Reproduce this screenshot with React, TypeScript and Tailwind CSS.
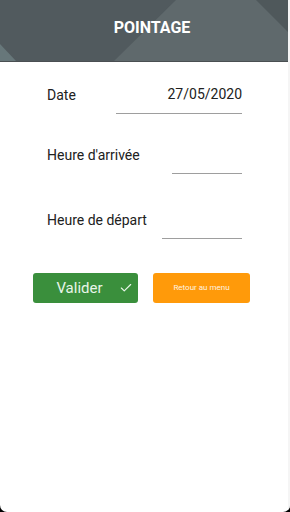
import { Check } from "lucide-react";

function HeaderArt() {
  return (
    <svg
      className="absolute inset-0 h-full w-full"
      viewBox="0 0 288 61"
      preserveAspectRatio="none"
    >
      <rect width="288" height="61" fill="#515a5e" />
      <polygon points="176,0 288,0 288,61 114,61" fill="#5f696c" />
      <polygon points="256,0 288,0 288,32" fill="#4f585b" />
      <polygon points="0,44 16,61 0,61" fill="#67777a" />
    </svg>
  );
}

function Field({
  label,
  value,
  lineWidth,
}: {
  label: string;
  value?: string;
  lineWidth: string;
}) {
  return (
    <div className="flex items-end justify-between">
      <span className="pb-[8px] text-[14px] text-[#212121]">{label}</span>
      <div className={`${lineWidth} border-b border-[#9e9e9e] pb-[8px] text-right text-[14px] text-[#212121]`}>
        {value ?? "\u00a0"}
      </div>
    </div>
  );
}

export default function App() {
  return (
    <div
      className="h-[512px] w-[290px] bg-black"
      style={{ fontFamily: "Roboto, 'Liberation Sans', sans-serif" }}
    >
      <div className="flex h-full w-full overflow-hidden rounded-b-[7px] bg-white">
        <div className="flex h-full w-[288px] flex-col">
          {/* Header */}
          <div className="relative h-[62px] border-b border-[#4a4f52]">
            <HeaderArt />
            <div className="relative flex h-full items-center justify-center pb-[5px] pl-[16px] text-[16px] font-bold text-white">
              POINTAGE
            </div>
          </div>

          {/* Form */}
          <div className="flex flex-col pl-[47px] pr-[46px] pt-[22px]">
            <Field label="Date" value="27/05/2020" lineWidth="w-[126px]" />
            <div className="h-[30px]" />
            <Field label="Heure d'arrivée" lineWidth="w-[70px]" />
            <div className="h-[35px]" />
            <Field label="Heure de départ" lineWidth="w-[80px]" />
          </div>

          {/* Buttons */}
          <div className="mt-[34px] flex gap-[15px] pl-[33px]">
            <button className="relative flex h-[30px] w-[105px] items-center justify-center rounded-[3px] bg-[#3a8f3c] text-[15px] text-[#e8f5e9]">
              <span className="pr-[12px]">Valider</span>
              <Check size={14} strokeWidth={2} className="absolute right-[5px] text-[#e8f5e9]" />
            </button>
            <button className="flex h-[30px] w-[97px] items-center justify-center rounded-[3px] bg-[#ff9a0a] text-[8px] text-[#fff3e0]">
              Retour au menu
            </button>
          </div>
        </div>
        <div className="h-full w-[2px] bg-[#f5f5f5]" />
      </div>
    </div>
  );
}
